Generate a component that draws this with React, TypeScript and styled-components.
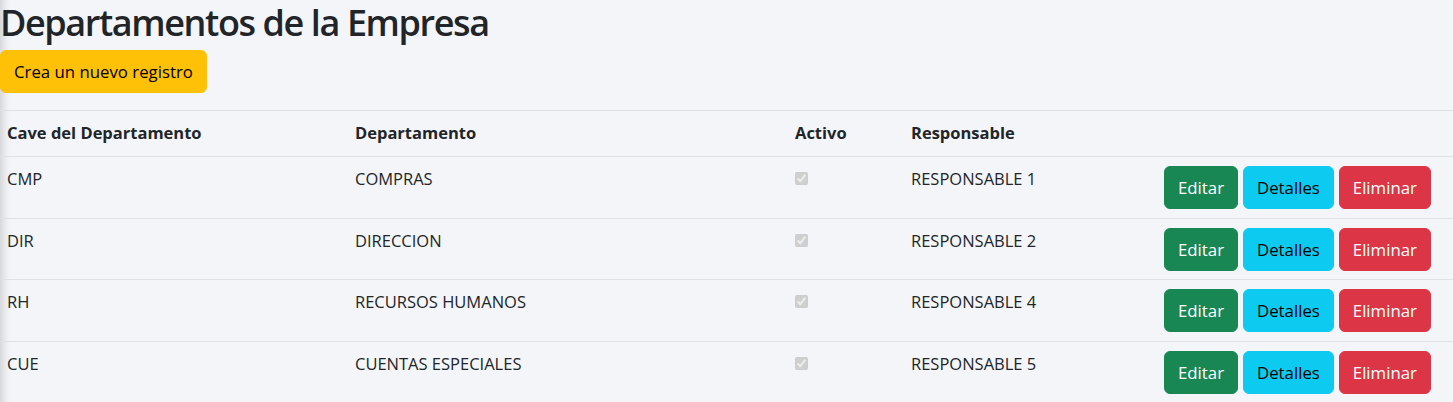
import { createGlobalStyle, styled } from "styled-components";

const GlobalStyle = createGlobalStyle`
  html, body {
    margin: 0;
    padding: 0;
  }
  body {
    background: #f4f5f9;
    color: #212529;
    font-family: "Open Sans", "Noto Sans", sans-serif;
    box-shadow: inset 10px 0 10px -8px rgba(0, 0, 0, 0.18);
    min-height: 402px;
  }
`;

const Page = styled.div`
  width: 1453px;
`;

const Title = styled.h1`
  margin: 0;
  font-size: 36px;
  font-weight: 600;
  line-height: 46px;
  letter-spacing: -1.4px;
`;

const Toolbar = styled.div`
  margin-top: 4px;
  margin-bottom: 17px;
`;

const Button = styled.button<{ $bg: string; $fg: string }>`
  font-family: inherit;
  font-size: 16.8px;
  line-height: 27px;
  padding: 7px 13px;
  border: 1px solid ${(p) => p.$bg};
  border-radius: 6px;
  background: ${(p) => p.$bg};
  color: ${(p) => p.$fg};
  cursor: pointer;
  white-space: nowrap;
`;

const Table = styled.table`
  width: 1453px;
  border-collapse: collapse;
  table-layout: fixed;
  font-size: 16.5px;
  line-height: 26px;
`;

const HeadCell = styled.th`
  text-align: left;
  font-weight: 700;
  padding: 9px 7px 10px;
  border-top: 1px solid #dee2e6;
  border-bottom: 1px solid #dee2e6;
`;

const Cell = styled.td`
  vertical-align: top;
  padding: 9px 7px 8.5px;
  border-bottom: 1px solid #dee2e6;
  height: 43px;
`;

const Actions = styled.div`
  display: flex;
  gap: 5px;
`;

const Check = styled.input`
  width: 13px;
  height: 13px;
  margin: 6px 0 0;
`;

const rows = [
  { clave: "CMP", depto: "COMPRAS", resp: "RESPONSABLE 1" },
  { clave: "DIR", depto: "DIRECCION", resp: "RESPONSABLE 2" },
  { clave: "RH", depto: "RECURSOS HUMANOS", resp: "RESPONSABLE 4" },
  { clave: "CUE", depto: "CUENTAS ESPECIALES", resp: "RESPONSABLE 5" },
];

export default function App() {
  return (
    <>
      <GlobalStyle />
      <Page>
        <Title>Departamentos de la Empresa</Title>
        <Toolbar>
          <Button $bg="#ffc107" $fg="#000">Crea un nuevo registro</Button>
        </Toolbar>
        <Table>
          <colgroup>
            <col style={{ width: 348 }} />
            <col style={{ width: 440 }} />
            <col style={{ width: 116 }} />
            <col style={{ width: 253 }} />
            <col />
          </colgroup>
          <thead>
            <tr>
              <HeadCell>Cave del Departamento</HeadCell>
              <HeadCell>Departamento</HeadCell>
              <HeadCell>Activo</HeadCell>
              <HeadCell>Responsable</HeadCell>
              <HeadCell></HeadCell>
            </tr>
          </thead>
          <tbody>
            {rows.map((r) => (
              <tr key={r.clave}>
                <Cell>{r.clave}</Cell>
                <Cell>{r.depto}</Cell>
                <Cell>
                  <Check type="checkbox" checked disabled readOnly />
                </Cell>
                <Cell>{r.resp}</Cell>
                <Cell>
                  <Actions>
                    <Button $bg="#198754" $fg="#fff">Editar</Button>
                    <Button $bg="#0dcaf0" $fg="#000">Detalles</Button>
                    <Button $bg="#dc3545" $fg="#fff">Eliminar</Button>
                  </Actions>
                </Cell>
              </tr>
            ))}
          </tbody>
        </Table>
      </Page>
    </>
  );
}
